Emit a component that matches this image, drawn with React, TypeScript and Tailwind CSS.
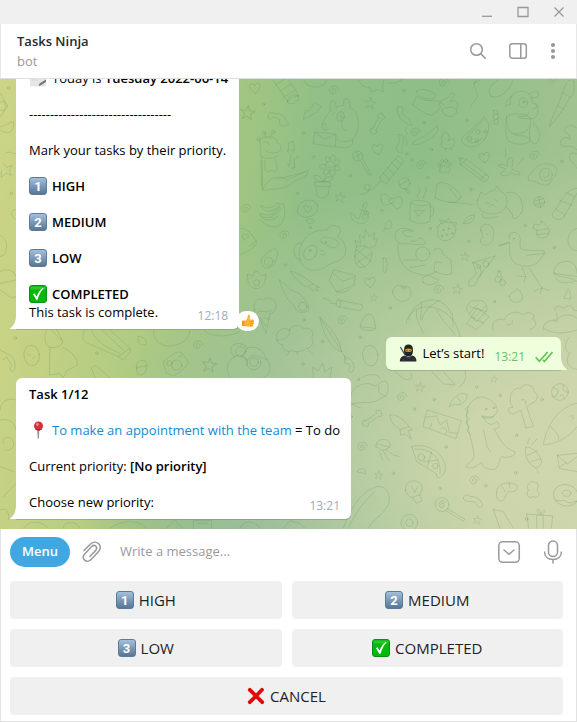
import React from "react";

function Star({ x, y, r = 17 }: { x: number; y: number; r?: number }) {
  return (
    <path
      transform={`translate(${x} ${y}) scale(${r / 20}) rotate(8)`}
      d="M0-20 5-6 20-6 8 4 13 18 0 9-13 18-8 4-20-6-5-6Z"
    />
  );
}

function Heart({ x, y }: { x: number; y: number }) {
  return (
    <path
      transform={`translate(${x} ${y}) rotate(-8)`}
      d="M0 15C-10 8-17 0-16-8-14-17-3-17 0-7 3-17 14-17 16-8 17 0 10 8 0 15Z"
    />
  );
}

function Swirl({ x, y }: { x: number; y: number }) {
  return (
    <path
      transform={`translate(${x} ${y})`}
      d="M1 1C-4 5-7-2-3-5 3-9 10-3 7 4 3 12-10 11-12 1-14-10-2-16 8-13 13-11 15-6 15-2"
    />
  );
}

function Bone({ x, y, turn }: { x: number; y: number; turn: number }) {
  return (
    <path
      transform={`translate(${x} ${y}) rotate(${turn})`}
      d="M-20-5H20C18-13 27-15 29-8 36-7 36 1 30 2 32 10 22 13 19 6H-20C-20 14-30 14-30 6-38 4-36-4-30-5-30-13-20-13-20-5Z"
    />
  );
}

const upperStars = [[23, 98, 22], [390, 70, 17], [300, 352, 16], [675, 530, 13], [652, 628, 15], [402, 653, 12]];
const upperHearts = [[45, 25], [413, 208], [733, 233], [390, 608]];
const upperSwirls = [[280, 32], [543, 256], [525, 158], [132, 466], [17, 387], [595, 630], [883, 228], [610, 8], [938, 0]];
const upperDots = [
  [70, 73], [189, 159], [220, 230], [330, 287], [172, 340], [491, 31], [552, 128], [574, 209], [563, 293],
  [425, 392], [210, 443], [680, 121], [570, 445], [136, 555], [965, 244], [855, 437], [686, 484], [942, 503],
  [763, 664], [450, 684], [500, 222], [515, 240], [692, 328],
];

function Wallpaper() {
  return (
    <div className="absolute inset-0 bg-[radial-gradient(ellipse_at_104%_84%,#d0d7ae_0%,#ccd5ac_16%,transparent_58%),radial-gradient(ellipse_at_48%_108%,#7dae90_0%,transparent_46%),linear-gradient(98deg,#ccd487_0%,#c3d184_12%,#a2c681_38%,#92bf87_50%,#90be88_68%,#a6c494_100%)]">
      <svg
        className="h-full w-full"
        viewBox="0 79 577 450"
        preserveAspectRatio="xMidYMid slice"
        fill="none"
        stroke="#55855a"
        strokeOpacity="0.25"
        strokeWidth="2.6"
        strokeLinecap="round"
        strokeLinejoin="round"
        aria-hidden="true"
      >
        {/* Upper right */}
        <g transform="translate(240 80) scale(.3333)">
          {upperStars.map(([x, y, r]) => <Star key={`${x}-${y}`} x={x} y={y} r={r} />)}
          {upperHearts.map(([x, y]) => <Heart key={`${x}-${y}`} x={x} y={y} />)}
          {upperSwirls.map(([x, y]) => <Swirl key={`${x}-${y}`} x={x} y={y} />)}
          {upperDots.map(([x, y]) => <circle key={`${x}-${y}`} cx={x} cy={y} r="4" />)}

          {/* sock, bone arc, lightning */}
          <path d="M98 0 140 60C145 80 172 72 176 52 175 38 160 20 145 0M108 14 138-4M120 33 155 12M132 50 168 30M142 67C142 50 160 38 175 48M142 67C150 55 160 50 175 48" />
          <path d="M85 112C80 100 95 92 105 102 120 98 133 106 137 120 148 124 148 138 136 136 128 142 116 135 119 126 120 115 107 112 99 112 95 120 86 120 85 112Z" />
          <path d="M225 68 243 80 234 93 204 112 190 118 197 90 204 94Z" />

          {/* bear reading a letter */}
          <path d="M272 92C268 75 270 62 278 62 287 64 288 72 288 84 295 78 305 76 312 77 308 60 315 53 325 58 330 66 329 78 329 82 350 90 356 115 355 140 352 160 345 172 338 178L338 190C330 206 305 205 288 200M272 92C258 108 248 122 246 140 246 150 256 152 264 148M220 192 224 156 288 162 286 200 220 192M224 156 254 178 288 162M288 176C300 185 325 190 338 178M306 122C300 134 310 160 320 150" />
          <ellipse cx="302" cy="110" rx="11" ry="15" transform="rotate(12 302 110)" />
          <path d="M298 108C302 100 308 108 304 117M246 134C250 128 258 130 258 136L252 142M284 96 276 105" />

          {/* giraffe with guitar */}
          <path d="M62 228 60 188C58 175 68 170 78 172M78 172 74 160M90 170 98 158M78 172C100 166 110 178 112 188 130 195 124 218 106 218 96 222 85 218 75 210M62 228C78 240 100 236 112 228M66 234 68 330C80 300 110 280 140 300L190 278 205 270 200 286 160 306C140 330 100 325 68 332M75 240V270L85 276 92 270 104 276 112 268 106 236M68 190C72 182 86 184 88 194M64 242V320M110 298 195 276" />
          <circle cx="72" cy="158" r="5" /><circle cx="100" cy="156" r="5" /><circle cx="56" cy="178" r="5" />
          <path d="M147 210 144 190 160 184 164 210M147 210C138 206 138 218 146 216M164 210C155 206 154 218 162 216M150 252 152 225M150 252C141 248 140 258 148 258M164 262 162 238 176 230M164 262C155 258 155 270 162 268" />

          {/* flower pot */}
          <circle cx="271" cy="258" r="14" />
          <path d="M262 246C250 235 262 218 270 240 272 220 292 220 284 242 302 235 308 250 286 256 308 262 304 278 284 268 290 290 272 298 268 274 258 290 242 286 256 268 232 268 232 248 258 254M265 260C270 268 276 265 278 260M256 290 250 306M248 304C230 308 222 295 222 286 238 285 246 294 248 304ZM252 304C255 290 270 288 280 292 275 304 262 308 252 304M225 306H270V320L225 318ZM228 320 232 348C240 356 260 354 264 346L268 320" />

          {/* banana, fried face, anchor, match, bow */}
          <path d="M112 370C100 385 80 388 62 376 68 398 98 400 118 378M118 378C112 400 90 412 60 400 64 418 100 422 122 385M60 418C74 434 95 445 114 440 134 426 140 400 130 372L112 370M58 404C70 425 95 425 115 408" />
          <ellipse cx="203" cy="386" rx="32" ry="25" transform="rotate(-20 203 386)" />
          <path d="M203 398C190 388 190 378 196 376 202 374 204 380 204 382 210 374 218 380 214 388ZM198 422C205 412 222 416 222 424 216 434 202 432 198 422Z" />
          <path d="M372 372C378 362 386 368 380 376L366 416C374 422 384 412 382 402L372 404 382 392C394 408 380 434 360 430 338 428 330 412 332 398L344 406C346 412 350 418 358 416L370 378C366 376 366 372 372 372ZM358 388 386 398" />
          <circle cx="353" cy="228" r="15" />
          <path d="M340 234 366 220M362 242 386 285 394 284 368 236M348 216C355 226 358 234 355 242" />
          <path d="M424 360C418 348 426 338 436 342L452 356 466 354C474 346 488 352 486 362 488 372 482 388 468 386L456 370 438 376C428 376 424 370 424 360ZM452 356 446 366 456 370 462 362" />

          {/* dumbbell bone, streamers, firecracker */}
          <Bone x={412} y={131} turn={-60} />
          <path d="M473 82C488 70 492 90 486 100 500 110 514 120 514 136M473 82C468 92 478 108 480 116 490 124 500 128 505 134L514 136M474 164C484 178 476 190 470 200 464 212 478 222 488 218 480 205 490 195 490 182 490 170 484 160 474 164M500 140 495 150 502 160 494 172 502 184 498 198M590 138C580 150 565 160 552 170 535 178 520 180 518 194 540 196 555 185 570 176 590 165 600 145 590 138Z" />
          <path d="M420 292 472 230C480 226 490 236 490 246L440 310C428 308 422 302 420 292ZM430 280 448 300M442 262 462 284M455 248 476 268M466 236 486 254M420 305C405 320 388 338 376 330 368 318 384 304 390 318 388 336 375 345 362 343" />
          <path d="M518 74 530 48C550 68 580 60 600 64L618 56 636 38 645 44 630 66 640 62M518 74C535 88 560 105 575 106 590 95 600 88 604 78M530 34C540 22 570 28 586 44 588 54 578 60 560 56 545 54 530 46 530 34M606 90C615 78 645 78 652 92 648 108 635 112 622 108 612 106 606 98 606 90M598 78 600 66 612 76M640 60 654 68 650 88" />
          <path d="M355 0 368 18 390 24 395 36 412 28 430 36 428 14 432 0M446 10 470 8 490-4M192 0C198 24 240 30 256 8L260 0" />

          {/* watermelon, brush, candy */}
          <path d="M733 112 664 176C668 205 710 210 732 180 750 155 752 130 733 112ZM728 122 676 176C690 195 715 190 728 172" />
          <circle cx="690" cy="176" r="6" /><circle cx="714" cy="155" r="6" /><circle cx="710" cy="182" r="5" /><circle cx="736" cy="155" r="5" />
          <path d="M760 92C768 86 778 92 772 102 780 106 774 116 772 116 778 124 774 136 764 132 756 126 766 120 762 116 756 108 766 106 760 92M764 104 773 100M764 120 774 116" />
          <path d="M968 38C974 20 978 4 990 0M968 38 992 52C1004 40 1004 20 1000 0M968 38C958 70 940 100 928 140 950 120 975 80 990 52M955 78 970 88" />
          <path d="M712-6C690 18 716 36 712 52 702 66 690 74 692 82M752 48C735 20 765 10 778-6M752 48C780 62 810 28 820 0M700 10 720 0" />

          {/* puppy */}
          <path d="M812 72C806 50 820 34 845 34 858 34 866 40 872 46L878 70 890 72C898 85 896 104 885 112 880 118 850 118 836 112M812 72 798 78C795 66 806 50 818 48M866 42C880 38 884 30 892 34 904 48 890 54 874 54M800 110C795 140 796 170 806 184 830 196 860 194 870 184 868 170 850 166 840 168 815 160 800 160 800 110 820 95 870 100 872 120 875 150 845 168 820 160M880 128C905 150 902 180 888 192 868 190 864 165 872 140" />
          <ellipse cx="850" cy="68" rx="13" ry="15" />
          <circle cx="852" cy="66" r="4" />
          <path d="M878 88 890 82 888 72M838 108C850 114 866 105 868 98" />

          {/* duckling, paw, pencil, plane, egg */}
          <path d="M606 172C602 160 618 152 626 164 630 174 626 178 624 182L640 176C650 188 640 206 624 206 600 206 600 190 608 182L604 176ZM618 206 616 212M632 206 636 211" />
          <path d="M600 275C596 262 608 252 620 260 634 262 634 278 622 276 612 274 610 282 600 275Z" />
          <ellipse cx="598" cy="255" rx="4" ry="6" /><ellipse cx="607" cy="244" rx="4" ry="6" /><ellipse cx="619" cy="242" rx="4" ry="6" /><ellipse cx="629" cy="252" rx="4" ry="6" />
          <path d="M658 234 662 254 724 300C732 310 746 302 746 288L680 238ZM662 254 680 238M672 248 735 298M724 300C724 290 738 280 744 286M658 234 666 236 662 242" />
          <path d="M774 256C790 246 798 262 802 258 798 240 810 226 818 238 822 250 812 262 816 268L838 276C846 288 828 286 812 278 806 288 790 290 780 282L796 268ZM796 206 798 230M850 232C844 240 846 246 834 252" />
          <path d="M866 288C876 284 880 268 888 262 905 246 948 248 950 270 950 290 938 292 928 312 905 325 890 298 866 302ZM910 290C920 298 932 286 926 276" />
          <circle cx="918" cy="284" r="19" />

          {/* coral, snack */}
          <path d="M1011 145C1000 130 970 136 974 152 980 166 990 160 990 178 975 164 955 180 964 196 980 206 1000 190 1011 210M1011 222C990 210 980 232 996 246 1005 250 1005 264 1011 265" />
          <path d="M1011 325C990 325 970 350 958 372L936 402C940 420 960 422 970 414L1011 340M958 360 996 376M976 336 1002 350M946 384C956 400 972 394 974 408" />
          <circle cx="898" cy="366" r="16" />
          <path d="M884 364 910 356M888 374 912 368M896 350 902 382" />

          {/* bubblegum, mug, mouse, cat */}
          <circle cx="493" cy="310" r="17" />
          <path d="M478 316 506 300M498 328C510 330 516 338 506 342 498 340 504 334 494 326" />
          <path d="M512 368C525 355 560 362 572 372L570 424C550 434 520 430 510 420ZM512 368C530 382 555 376 572 374M570 380C586 378 584 408 570 412M524 390 554 392 534 408ZM536 356C524 345 545 340 538 328M552 356C545 345 566 338 556 322" />
          <path d="M586 354 590 314C605 300 640 312 664 350L655 358 630 326M586 354C620 372 660 366 700 374M664 350C660 365 640 370 625 366" />
          <path d="M714 360 722 336 738 344C750 330 760 332 764 330L770 318 780 334C800 340 805 360 798 380 780 410 740 405 722 390 710 380 710 368 714 360ZM800 338C830 330 850 355 848 390 838 415 815 425 818 404L800 380M728 402C720 415 740 418 775 410M738 368 750 372M762 356 775 366M748 380 758 372 768 382" />

          {/* strawberry, leaf, peanut, bee */}
          <path d="M594 440C600 420 645 422 648 446 645 470 630 484 612 482 592 480 590 460 594 440ZM606 432 598 420 620 424 626 414 632 426 652 430 640 440" />
          <circle cx="610" cy="450" r="2" /><circle cx="626" cy="446" r="2" /><circle cx="620" cy="464" r="2" /><circle cx="636" cy="460" r="2" /><circle cx="606" cy="468" r="2" />
          <path d="M670 430C680 405 695 405 704 406 702 425 688 435 670 430L695 414M430 454 436 444C432 432 440 424 448 420L456 432C455 445 445 450 436 446" />
          <path d="M722 450C720 430 750 425 760 448 765 475 755 495 738 496 720 492 715 482 728 472 730 462 722 460 722 450ZM738 460 744 464" />
          <path d="M884 432C895 440 908 432 904 422L924 442C932 455 925 474 910 474 892 475 886 462 892 450L880 446ZM892 452 924 446M892 464 926 460" />

          {/* avocado, lotus, fish face */}
          <path d="M96 508C112 502 118 514 110 530 108 556 90 568 74 562 58 552 62 535 72 528Z" />
          <circle cx="86" cy="545" r="13" />
          <path d="M22 584C30 580 34 590 38 588 44 580 46 570 52 574 60 582 62 592 78 582 76 605 74 622 52 626 30 626 22 610 22 584Z" />
          <circle cx="50" cy="608" r="9" />
          <path d="M0 446C20 440 45 470 50 490 40 508 20 515 0 525M12 480C-2 466 10 455 16 466 24 458 34 472 12 480M30 498 52 480" />

          {/* panda */}
          <path d="M262 450C266 432 298 430 302 452 300 465 296 466 292 468 312 480 320 500 316 520 310 545 275 545 258 560 235 576 195 575 182 545 172 520 180 500 192 480 205 458 235 448 262 450M182 540C160 535 155 505 170 492 180 486 186 492 186 494" />
          <ellipse cx="211" cy="518" rx="18" ry="24" transform="rotate(35 211 518)" />
          <path d="M245 488C235 470 262 468 280 476 300 482 298 502 280 504 265 502 260 492 245 488ZM240 510 250 514M242 522C248 528 256 525 256 518" />
          <circle cx="210" cy="512" r="3" /><circle cx="257" cy="488" r="3" />

          {/* pineapple */}
          <path d="M350 500C365 492 388 500 397 515 395 545 380 565 360 562 340 555 342 525 350 500ZM350 500 345 482 362 490 358 465 372 476 376 448 388 470 405 458 400 478 413 475 405 498 390 502M348 508 393 545M344 528 374 562M394 520 350 550M376 500 344 530" />
          <path d="M430 534C440 530 442 540 438 546 446 550 440 560 438 562 444 572 438 580 430 576 426 570 432 564 430 558 426 550 432 546 430 534Z" />

          {/* cat with ball */}
          <circle cx="548" cy="522" r="21" />
          <path d="M518 452C495 438 462 445 465 470 468 488 485 495 500 490 520 492 540 498 556 490 552 476 540 470 535 478 525 488 520 480 510 484M475 490C470 520 480 550 505 570 540 590 570 588 590 575M580 512C590 498 610 505 606 520L632 540 636 580C620 588 598 582 582 572L586 545 604 548M514 470C478 470 480 440 518 455M490 540 530 540M510 562 555 556M550 608C540 595 555 585 570 588L596 600C590 615 560 620 550 608" />

          {/* pizza, cherries, bird */}
          <path d="M766 528 698 548 710 582 686 604C682 625 705 625 712 600L720 586 766 528M698 548C720 550 730 575 720 592" />
          <circle cx="738" cy="552" r="9" /><circle cx="716" cy="560" r="6" />
          <circle cx="774" cy="598" r="9" /><circle cx="788" cy="608" r="9" />
          <path d="M772 588 776 572 788 596M776 572 786 576" />
          <path d="M808 478C802 460 825 448 838 466 845 480 836 495 842 505 860 515 880 510 912 512 918 522 905 530 890 550 865 565 830 560 816 540 804 520 812 500 808 486L776 498 808 488M860 526 912 520M846 562 858 590 830 588M858 590 852 606M866 562 906 624 884 634M906 624 900 642M906 624 928 632" />
          <circle cx="822" cy="476" r="2" />
          <path d="M942 580C940 555 965 540 990 545 1008 550 1011 570 1011 580M942 580 1011 590M946 592C950 606 970 614 1005 604M942 580C950 592 980 586 1011 604" />
          <path d="M1011 445C992 452 980 470 985 490 990 505 1000 512 1011 512M808 650C810 635 825 640 832 625 845 638 850 650 846 660 830 672 812 668 808 650ZM972 654 984 626C990 635 995 645 992 656Z" />

          {/* comet, rocket, envelope, orange */}
          <path d="M118 600C135 610 140 618 152 630L178 640C190 655 210 670 206 690 190 705 165 698 162 676 145 665 130 640 118 600" />
          <circle cx="188" cy="680" r="13" />
          <path d="M152 574C170 575 200 595 218 612L204 622C185 615 165 598 152 574ZM218 612 238 622 228 624 236 634 222 628 218 634 210 622" />
          <path d="M282 570 346 586 342 616 290 636 268 602ZM278 578 308 604 344 590M286 630C300 645 320 636 330 626" />
          <path d="M458 636C460 615 480 612 486 620 510 612 518 635 510 652 495 672 465 668 458 636ZM486 620C480 628 495 630 500 624L486 620" />
          <path d="M294 660 366 674C370 682 366 692 360 692L292 680C286 672 288 664 294 660ZM302 662 300 681M250 656C260 650 258 665 268 660 272 675 282 668 288 672" />

          {/* ice cream, ball, cupcake */}
          <path d="M44 690C35 665 55 650 68 660 85 645 112 660 108 680 104 695 95 705 90 700L78 760 56 710C48 706 42 700 44 690ZM52 696C70 690 80 700 94 692M70 712 88 718M60 712 78 740" />
          <path d="M506 720C515 660 600 630 634 700M545 668 542 720M546 720C550 690 580 670 600 660M636 700 640 740" />
          <path d="M680 690C680 665 700 658 712 664 730 655 745 675 740 692L710 725ZM690 680 738 695M688 700 715 672M700 715 735 680" />
          <path d="M945 690C940 680 960 675 970 685 985 675 1000 675 1000 690L1011 692M950 700C955 720 945 722 940 720" />
        </g>

        {/* Lower right */}
        <g transform="translate(340 310) scale(.3333)">
          {[[185, 262], [402, 512], [66, 411]].map(([x, y]) => <Swirl key={`${x}-${y}`} x={x} y={y} />)}
          {[[240, 232, 14], [412, 630, 13], [116, 496, 13], [462, 208, 11]].map(([x, y, r]) => <Star key={`${x}-${y}`} x={x} y={y} r={r} />)}
          {[[282, 269], [223, 297], [318, 411], [160, 490], [530, 376], [527, 489], [606, 269], [437, 527], [300, 535], [480, 256], [410, 231], [33, 320], [560, 627]].map(([x, y]) => (
            <circle key={`${x}-${y}`} cx={x} cy={y} r="4" />
          ))}
          <Bone x={97} y={325} turn={-35} />
          <path d="M198 40C205 5 240-20 290-5 335 10 355 50 360 80M230 0C225 30 240 45 250 70M290 0C310 40 330 50 345 75" />
          <path d="M380 40 412-5 448 20 410 58ZM395 22 432 40M460 62C448 35 478 20 492 30 500 5 540 0 545 15 570 0 590 12 578 28 595 35 588 55 570 58M500 42C510 50 520 40 518 32M610 60C605 40 630 25 650 35 655 10 700 10 711 25M612 55C640 75 680 70 711 60" />
          <path d="M165 185 190 205C205 215 225 205 212 188M275 185 312 222 345 225 310 185M375 184C382 205 372 220 358 230" />
          <path d="M28 280C25 250 50 215 90 222 115 235 115 220 125 215 148 205 148 240 138 258 115 265 120 275 85 278 50 275 45 285 28 280ZM28 280 62 294M118 228C110 245 120 255 138 258" />
          <path d="M328 290C335 262 365 240 382 255 382 275 360 290 342 282L328 290M352 262 362 275" />
          <path d="M150 315C165 308 200 335 206 350L218 360 204 362 214 388 196 372 182 376 180 358C165 350 150 335 150 315ZM182 358 206 350" />
          <path d="M262 300 364 332 348 386 250 350ZM256 322 290 318 300 345 320 330 328 368 352 370M275 340 270 355M305 355C315 350 325 360 318 370" />
          {/* dinosaur */}
          <path d="M412 262C440 255 475 280 472 305 465 325 440 322 428 318M428 318C440 345 455 350 470 335 485 345 475 358 462 358 480 385 490 415 525 425 530 440 500 445 485 440 475 450 480 465 465 478 440 480 425 470 425 458 410 465 400 480 380 472 375 460 395 462 402 440 400 400 388 380 384 350 375 310 380 280 412 262M384 290 376 296 386 306 378 316 386 326 378 338 388 350 380 362 392 374M430 360C440 385 435 410 452 425M425 320C440 328 455 324 462 320" />
          <circle cx="438" cy="297" r="3" /><circle cx="462" cy="293" r="3" />
          <path d="M512 280C505 250 525 230 542 235 550 215 585 225 582 245 600 255 592 275 575 280L560 290 580 350 558 354 542 300 520 312C500 310 500 290 518 292ZM545 270C555 265 560 275 556 282" />
          <circle cx="660" cy="246" r="25" />
          <path d="M640 232 655 240 650 258 636 260M672 225 668 238 684 248M660 258C664 250 674 256 670 264M711 280C660 290 620 340 610 405 650 402 690 380 711 350M630 350C650 365 660 380 655 390M690 320C695 312 705 320 698 328" />
          <path d="M215 410C265 395 320 435 316 480 308 505 285 510 290 492L230 455 215 410ZM225 418C270 412 305 445 300 490M262 470 275 425M250 455 295 450" />
          <circle cx="244" cy="442" r="10" /><circle cx="286" cy="468" r="8" />
          <path d="M108 410C105 390 135 380 148 395 155 410 140 422 125 420L108 410ZM118 424 128 450M128 420 148 452M138 418 160 435 178 440M112 402 150 412" />
          <path d="M558 412C570 405 600 430 605 455 600 475 590 475 578 468 560 455 552 430 558 412ZM562 436 594 422M570 456 602 446M562 400 570 382M576 404 590 388M588 474 596 488" />
          <path d="M652 436 711 430M652 436 658 475 711 485M652 436 682 462 711 440M660 470 680 458" />
          <ellipse cx="678" cy="556" rx="38" ry="32" transform="rotate(15 678 556)" />
          <ellipse cx="680" cy="550" rx="13" ry="9" />
          <path d="M645 570C660 578 665 565 680 575 695 585 700 570 711 575M196 540C196 515 220 505 238 518 252 530 246 545 238 552L246 572 228 580 218 562C205 560 198 552 196 540ZM218 562 240 554M215 530 224 548 232 530" />
          <circle cx="306" cy="584" r="21" />
          <path d="M306 586C300 584 304 576 310 580 318 588 304 598 298 590 292 575 310 566 318 578M322 596 374 628 370 634 318 602" />
          <path d="M370 566C370 552 385 552 390 560 410 558 425 570 428 588 418 596 412 590 410 582 400 572 392 575 384 575ZM470 548C470 522 500 510 530 525 535 545 520 545 510 545 495 545 500 570 482 574 470 570 468 558 470 548ZM486 530 496 545M508 520 510 535" />
          <path d="M565 540C555 530 570 510 580 516 600 515 595 535 590 540 605 550 595 568 580 560 565 568 555 552 565 540M460 598 490 605 520 655M460 598 480 655M560 612 638 618 634 655M560 612 566 655M600 616C580 595 600 592 602 612 612 590 625 605 602 616M590 616V655M610 616V655" />
          {/* whale */}
          <path d="M10 655C30 600 60 545 110 530 140 525 155 555 145 585 130 615 95 630 85 655M25 655C45 610 70 575 105 545M0 475C20 470 30 490 22 505L0 515M52 485C55 470 80 475 78 490Z" />
          <circle cx="208" cy="638" r="25" /><circle cx="208" cy="638" r="11" />
          <path d="M690 80C670 100 672 120 690 130 675 150 680 175 711 178" />
        </g>

        {/* Band between the bubbles */}
        <g transform="translate(0 310) scale(.3333)">
          <Swirl x={593} y={107} />
          <Swirl x={1027} y={32} />
          <Star x={628} y={165} r={22} />
          {[[46, 84], [909, 162], [968, 95], [1075, 208], [1080, 82], [290, 130], [912, 30]].map(([x, y]) => <circle key={`${x}-${y}`} cx={x} cy={y} r="4" />)}
          <ellipse cx="95" cy="136" rx="23" ry="31" transform="rotate(-8 95 136)" />
          <path d="M82 130 92 138M98 146 106 140M0 120 30 135C48 150 50 175 38 185 30 185 28 175 36 168L20 140 8 150M140 60C130 80 135 110 150 112 160 115 190 110 188 92 175 85 165 70 155 60M150 112 148 195 180 190 190 204 200 182 232 165C235 145 210 120 188 112M170 60 188 92" />
          <path d="M255 60C245 75 245 95 265 100L355 140 390 115 330 60M275 60C280 85 310 110 360 130M305 60 370 120M355 140 370 150 392 125 390 115M275 175C280 165 295 165 300 178L330 204M275 175 285 204M415 80C430 78 442 90 438 105 420 108 410 95 415 80" />
          <path d="M410 175C405 155 425 145 438 155 445 175 435 195 422 195 412 192 410 185 410 175ZM408 172 442 168M462 60C455 85 480 108 505 108 540 108 570 90 570 60M490 155C510 140 530 120 545 128L565 155C560 175 540 185 520 198L500 190ZM535 142 548 134" />
          <circle cx="530" cy="165" r="15" /><circle cx="508" cy="160" r="8" />
          {/* bear with goggles */}
          <path d="M690 204C675 180 680 150 705 140 690 130 688 108 705 102 720 98 740 105 742 115 765 105 790 120 795 140L808 160C815 185 800 200 790 204M705 140C725 125 745 145 740 165M612 60C630 82 690 85 720 62M742 115 725 140 742 150M780 140 804 150" />
          <circle cx="722" cy="125" r="15" /><circle cx="762" cy="158" r="21" /><circle cx="762" cy="156" r="13" />
          {/* sheep */}
          <path d="M868 60C880 40 905 45 910 55 935 50 945 70 935 82 945 95 935 115 918 115 905 130 885 125 878 122 860 130 845 115 848 105 832 100 828 90 830 75 835 55 855 52 868 60ZM868 60C872 75 860 92 830 90M870 124 862 135M890 126 895 136M920 114 938 130" />
          {/* umbrella, bell, egg */}
          <path d="M960 22C985 45 1020 85 1025 125 1000 120 970 80 960 22C985 65 1010 100 1025 125M1025 125 1040 150M1035 140C1060 145 1068 170 1058 185 1048 190 1040 180 1048 176 1055 165 1045 160 1035 160Z" />
          <path d="M1080 50C1085 35 1092 15 1108 12 1128 20 1122 40 1128 55L1080 50C1090 65 1120 65 1128 55" />
          <ellipse cx="1111" cy="137" rx="23" ry="31" transform="rotate(-8 1111 137)" />
          <path d="M940 204 938 170 955 182 968 160 975 185 995 172 990 204M1085 204C1100 190 1130 190 1140 204" />
          {/* lower left edge */}
          <path d="M48 270C20 260 0 280 0 300M0 330C25 325 45 335 48 360M12 400C0 385 25 375 38 390 48 405 35 425 15 420M0 470 42 485M10 560 48 520M0 600C20 590 30 610 25 630" />
          <path d="M70 655C90 630 120 630 145 655M190 655C190 632 235 632 238 655M330 655C360 628 420 628 440 655M500 655 525 630 550 655M580 655V632H635V655M590 640H625M720 655C730 625 770 635 780 655M850 655 870 632 900 640 915 655" />
        </g>

        {/* Left edge */}
        <g transform="translate(0 80) scale(.3333)">
          <path d="M0 40C18 60 25 90 0 110M0 150C20 165 45 160 40 125 20 130 10 140 0 140M15 220C30 210 40 225 48 220M10 250 20 262 36 256 28 272 34 286 18 280 4 292 4 272M48 388C30 390 30 410 48 418M0 465C22 480 26 500 12 525L0 530M0 575C20 560 45 575 48 590M0 610 48 600M0 630C20 640 30 660 48 650" />
          <circle cx="8" cy="78" r="14" /><circle cx="26" cy="24" r="4" /><circle cx="34" cy="340" r="4" />
        </g>
      </svg>
    </div>
  );
}

function Keycap({ digit }: { digit: number }) {
  return (
    <span className="inline-flex size-[18px] shrink-0 items-center justify-center rounded-[3px] border border-[#5d7b99] bg-linear-to-b from-[#a3bfdc] to-[#577795] font-['Roboto',sans-serif] text-[13px] leading-none font-bold text-white">
      {digit}
    </span>
  );
}

function CheckMark() {
  return (
    <svg className="size-[18px] shrink-0" viewBox="0 0 18 18" aria-hidden="true">
      <rect x="0.5" y="0.5" width="17" height="17" rx="2.5" fill="#05b80c" stroke="#0b8f12" />
      <path d="M1.5 1.5h15v3h-15z" fill="#45cf45" opacity="0.6" />
      <path d="m3.8 9.2 1.7-.9 2 3.3c1.5-3.7 3.5-6.7 6.3-8.6l.8.3c-2.9 3-4.7 6.9-6 11.5H7.1C6.3 12.8 5.3 11 3.8 9.2Z" fill="#fff" />
    </svg>
  );
}

function CrossMark() {
  return (
    <svg className="size-[18px] shrink-0" viewBox="0 0 18 18" aria-hidden="true">
      <path d="M2.8 2.8 9 9m0 0 6-6.2M9 9l6.2 6.2M9 9l-6.2 6.2" fill="none" stroke="#e00a0a" strokeWidth="3.8" strokeLinecap="round" />
    </svg>
  );
}

function Memo() {
  return (
    <svg className="size-[18px] shrink-0" viewBox="0 0 18 18" aria-hidden="true">
      <path d="M1 0h16v17.5H1z" fill="#e6e6e6" />
      <path d="M3 5h10M3 8h8M3 11h6" stroke="#d8d8d8" />
      <path d="m9.5 17 1-2.5L17 10.5v2.5l-5.5 3.5Z" fill="#777" />
    </svg>
  );
}

function Pushpin() {
  return (
    <svg className="size-[18px] shrink-0" viewBox="0 0 18 18" aria-hidden="true">
      <path d="M8.3 8h2l-.4 9.500h-1.200Z" fill="#8b8f93" />
      <circle cx="9.5" cy="5" r="4.5" fill="#d5303b" />
      <path d="M6 7.8c2 2.3 5.3 2.2 7-.1-1 .6-5 1-7 .1Z" fill="#9f1f2b" />
      <circle cx="8.4" cy="3.5" r="1.4" fill="#f08a8c" />
    </svg>
  );
}

function Ninja() {
  return (
    <svg className="size-[18px] shrink-0" viewBox="0 0 18 18" aria-hidden="true">
      <path d="m.8 3.3 1-.6 5 8-1.2.8Z" fill="#4a4d52" />
      <path d="M.8 17.5c0-3.5 1.5-5.3 5-6L9.5 13l3.7-1.5c3 .7 4.3 2.5 4.3 6Z" fill="#292b30" />
      <path d="M5 6c0-3.7 1.6-5.5 4.5-5.5S14 2.3 14 6s-1.2 6.5-4.5 6.5S5 9.7 5 6Z" fill="#212328" />
      <path d="M6.3 5.2c2-.5 4.4-.5 6.4 0v2c-2 .8-4.4.8-6.4 0Z" fill="#f2b51d" />
      <path d="M7.3 6.2h1.4M10.3 6.2h1.4" stroke="#292b30" strokeWidth="1.1" />
      <path d="m6 12.5 3.5 2 3.5-2M4 15l2 2.5M15 15l-1 2.5" fill="none" stroke="#4c4f55" strokeWidth=".7" />
    </svg>
  );
}

function ThumbsUp() {
  return (
    <svg className="size-3.5" viewBox="0 0 14 14" aria-hidden="true">
      <path d="M1 6.8h3.2C6 5.6 6.6 4 6.8 1.5 7 .5 8.9.6 9.1 2.3c.1 1-.2 2.2-.5 3.2h3.3c1.2 0 1.5 1.3.8 1.9.6.6.5 1.5-.2 1.9.4.7.1 1.5-.6 1.8.2 1-.3 1.6-1.3 1.6H7c-1.5 0-2-.6-3-.7H1Z" fill="#fbb436" />
      <path d="M1 6.8h2.7v5.2H1Z" fill="#f39a25" />
      <path d="M9 7.5h3.600M9 9.4h3.300M9 11.2h2.700" stroke="#e98f22" strokeWidth=".7" />
    </svg>
  );
}

function LeftTail() {
  return (
    <svg className="absolute bottom-0 -left-1.5 h-3.5 w-1.5" viewBox="0 0 6 14" aria-hidden="true">
      <path d="M6 0v14H.8C0 14 0 13.4.5 13 4 10.5 6 6.5 6 0Z" fill="#fff" />
    </svg>
  );
}

function RightTail() {
  return (
    <svg className="absolute -right-1.5 bottom-0 h-3.5 w-1.5" viewBox="0 0 6 14" aria-hidden="true">
      <path d="M0 0v14h5.2c.8 0 .8-.6.3-1C2 10.5 0 6.5 0 0Z" fill="#efffde" />
    </svg>
  );
}

function TitleBar() {
  return (
    <div className="flex h-6 shrink-0 items-center justify-end gap-6 bg-[#f0f0f0] pr-3 text-[#999]">
      <button aria-label="Minimize">
        <svg className="size-3" viewBox="0 0 12 12" stroke="currentColor" strokeWidth="1.3"><path d="M1 10.3h10" /></svg>
      </button>
      <button aria-label="Maximize">
        <svg className="size-3" viewBox="0 0 12 12" fill="none" stroke="currentColor" strokeWidth="1.3"><path d="M1 1.5h10v9H1Z" /></svg>
      </button>
      <button aria-label="Close">
        <svg className="size-3" viewBox="0 0 12 12" stroke="currentColor" strokeWidth="1.3"><path d="m1.5 1.5 9 9m0-9-9 9" /></svg>
      </button>
    </div>
  );
}

function Header() {
  return (
    <header className="flex h-[55px] shrink-0 items-center justify-between border-x border-b border-x-[#e7e7e7] border-b-[#dedede] bg-white pr-[15px] pl-4">
      <div className="leading-5">
        <h1 className="font-semibold text-[#222a30]">Tasks Ninja</h1>
        <p className="text-[#999]">bot</p>
      </div>
      <div className="flex items-center text-[#999]">
        <button aria-label="Search" className="mr-5">
          <svg className="size-5" viewBox="0 0 20 20" fill="none" stroke="currentColor" strokeWidth="1.5">
            <circle cx="8.5" cy="8.5" r="5.800" />
            <path d="m12.6 12.6 5.200 5.200" />
          </svg>
        </button>
        <button aria-label="Toggle info panel" className="mr-[17px]">
          <svg className="size-5" viewBox="0 0 20 20" fill="none" stroke="currentColor" strokeWidth="1.5">
            <rect x="1.8" y="2.8" width="16.5" height="14.5" rx="2.5" />
            <path d="M12.8 2.8v14.5" />
          </svg>
        </button>
        <button aria-label="More options">
          <svg className="h-5 w-4" viewBox="0 0 16 20" fill="currentColor">
            <circle cx="8" cy="4" r="2.1" />
            <circle cx="8" cy="10" r="2.1" />
            <circle cx="8" cy="16" r="2.1" />
          </svg>
        </button>
      </div>
    </header>
  );
}

function Chat() {
  return (
    <main className="relative flex min-h-0 flex-1 flex-col overflow-hidden">
      <Wallpaper />
      <div className="relative flex min-h-0 flex-1 flex-col justify-end gap-2 px-4 pb-2.5 leading-[18px] text-black">
        <article className="relative w-fit shrink-0 rounded-md rounded-bl-none bg-white pt-[7px] pr-[11px] pb-2 pl-[13px] shadow-[0_1px_0_rgba(80,120,70,0.3)]">
          <p className="flex gap-[5px] pb-[18px]">
            <Memo />
            <span>Today is <b className="font-semibold">Tuesday 2022-06-14</b></span>
          </p>
          <p className="pb-[18px]">----------------------------------</p>
          <p className="pb-[18px]">Mark your tasks by their priority.</p>
          <p className="flex gap-[5px] pb-[18px] font-semibold"><Keycap digit={1} /> HIGH</p>
          <p className="flex gap-[5px] pb-[18px] font-semibold"><Keycap digit={2} /> MEDIUM</p>
          <p className="flex gap-[5px] pb-[18px] font-semibold"><Keycap digit={3} /> LOW</p>
          <p className="flex gap-[5px] font-semibold"><CheckMark /> COMPLETED</p>
          <div className="flex justify-between">
            <p>This task is complete.</p>
            <time className="-mb-1 pt-1 text-xs leading-[18px] text-[#a0acb6]">12:18</time>
          </div>
          <LeftTail />
          <button aria-label="Thumbs up" className="absolute -right-5 -bottom-0.5 flex h-5 w-[23px] items-center justify-center rounded-full bg-white">
            <ThumbsUp />
          </button>
        </article>

        <article className="relative flex w-fit shrink-0 self-end rounded-md rounded-br-none bg-[#efffde] pt-[7px] pr-2 pb-2 pl-[13px] shadow-[0_1px_0_rgba(80,120,70,0.3)]">
          <p className="flex gap-[5px]"><Ninja /> Let’s start!</p>
          <div className="-mb-1 flex items-center gap-2.5 pt-1 pl-2.5 text-[#6cc264]">
            <time className="text-xs leading-[18px]">13:21</time>
            <svg className="h-3 w-[18px]" viewBox="0 0 18 12" fill="none" stroke="#5dc452" strokeWidth="1.6">
              <path d="m.7 6.3 3.600 4L12.700 1M7.800 8.800l1.700 1.500L17.500 1" />
            </svg>
          </div>
          <RightTail />
        </article>

        <article className="relative w-fit shrink-0 rounded-md rounded-bl-none bg-white pt-[7px] pr-[11px] pb-2 pl-[13px] shadow-[0_1px_0_rgba(80,120,70,0.3)]">
          <h2 className="pb-[18px] font-semibold">Task 1/12</h2>
          <p className="flex gap-[5px] pb-[18px]">
            <Pushpin />
            <span><a href="#task" className="text-[#168acd]">To make an appointment with the team</a> = To do</span>
          </p>
          <p className="pb-[18px]">Current priority: <b className="font-semibold">[No priority]</b></p>
          <div className="flex justify-between">
            <p>Choose new priority:</p>
            <time className="-mb-1 pt-1 text-xs leading-[18px] text-[#a0acb6]">13:21</time>
          </div>
          <LeftTail />
        </article>
      </div>
    </main>
  );
}

interface ReplyButtonProps {
  icon: React.ReactNode;
  label: string;
  wide?: boolean;
}

function ReplyButton({ icon, label, wide }: ReplyButtonProps) {
  return (
    <button
      className={`flex h-[38px] items-center justify-center gap-[5px] rounded bg-[#f0f0f0] text-[15px] font-medium text-[#1c2226] ${wide ? "col-span-2" : ""}`}
    >
      {icon}
      {label}
    </button>
  );
}

function Footer() {
  return (
    <footer className="shrink-0 border-x border-b border-[#e2e2e2] bg-white pr-[13px] pb-1.5 pl-[9px]">
      <div className="flex h-[46px] items-center text-[#999]">
        <button className="h-[30px] rounded-full bg-[#40a7e3] px-3 font-semibold text-white">Menu</button>
        <button aria-label="Attach file" className="ml-2.5">
          <svg className="size-6" viewBox="0 0 24 24" fill="none" stroke="currentColor" strokeWidth="1.5" strokeLinecap="round">
            <path d="M4 10.5 10.3 4.2c2.500-2.500 6-2.700 8.300-.6 2.400 2.300 2.200 5.700-.2 8.200l-7.300 7.700c-2 2.100-4.800 2.200-6.500.6-1.800-1.700-1.700-4.200.1-6.200l7-7.300c1.400-1.400 3-1.500 4.200-.4 1.200 1.200 1 2.800-.3 4.200L9.800 16.500" />
          </svg>
        </button>
        <input
          aria-label="Message"
          placeholder="Write a message..."
          className="ml-4 min-w-0 flex-1 bg-transparent outline-none placeholder:text-[#999]"
        />
        <button aria-label="Hide keyboard" className="mr-5">
          <svg className="size-6" viewBox="0 0 24 24" fill="none" stroke="currentColor" strokeWidth="1.5">
            <rect x="1.8" y="1.8" width="20.5" height="20.5" rx="4" />
            <path d="m7 10 5 4.300L17 10" strokeLinecap="round" />
          </svg>
        </button>
        <button aria-label="Record voice message" className="-mr-0.5">
          <svg className="size-6" viewBox="0 0 24 24" fill="none" stroke="currentColor" strokeWidth="1.5">
            <rect x="7.5" y=".9" width="9" height="15.6" rx="4.5" />
            <path d="M3.500 11.500c0 5 3.600 8 8.500 8s8.500-3 8.500-8M12 19.500v4" />
          </svg>
        </button>
      </div>
      <div className="mt-1.5 grid grid-cols-2 gap-2.5">
        <ReplyButton icon={<Keycap digit={1} />} label="HIGH" />
        <ReplyButton icon={<Keycap digit={2} />} label="MEDIUM" />
        <ReplyButton icon={<Keycap digit={3} />} label="LOW" />
        <ReplyButton icon={<CheckMark />} label="COMPLETED" />
        <ReplyButton icon={<CrossMark />} label="CANCEL" wide />
      </div>
    </footer>
  );
}

export default function App() {
  return (
    <div className="flex h-screen w-full flex-col bg-white font-['Open_Sans',sans-serif] text-[13px]">
      <TitleBar />
      <Header />
      <Chat />
      <Footer />
    </div>
  );
}
